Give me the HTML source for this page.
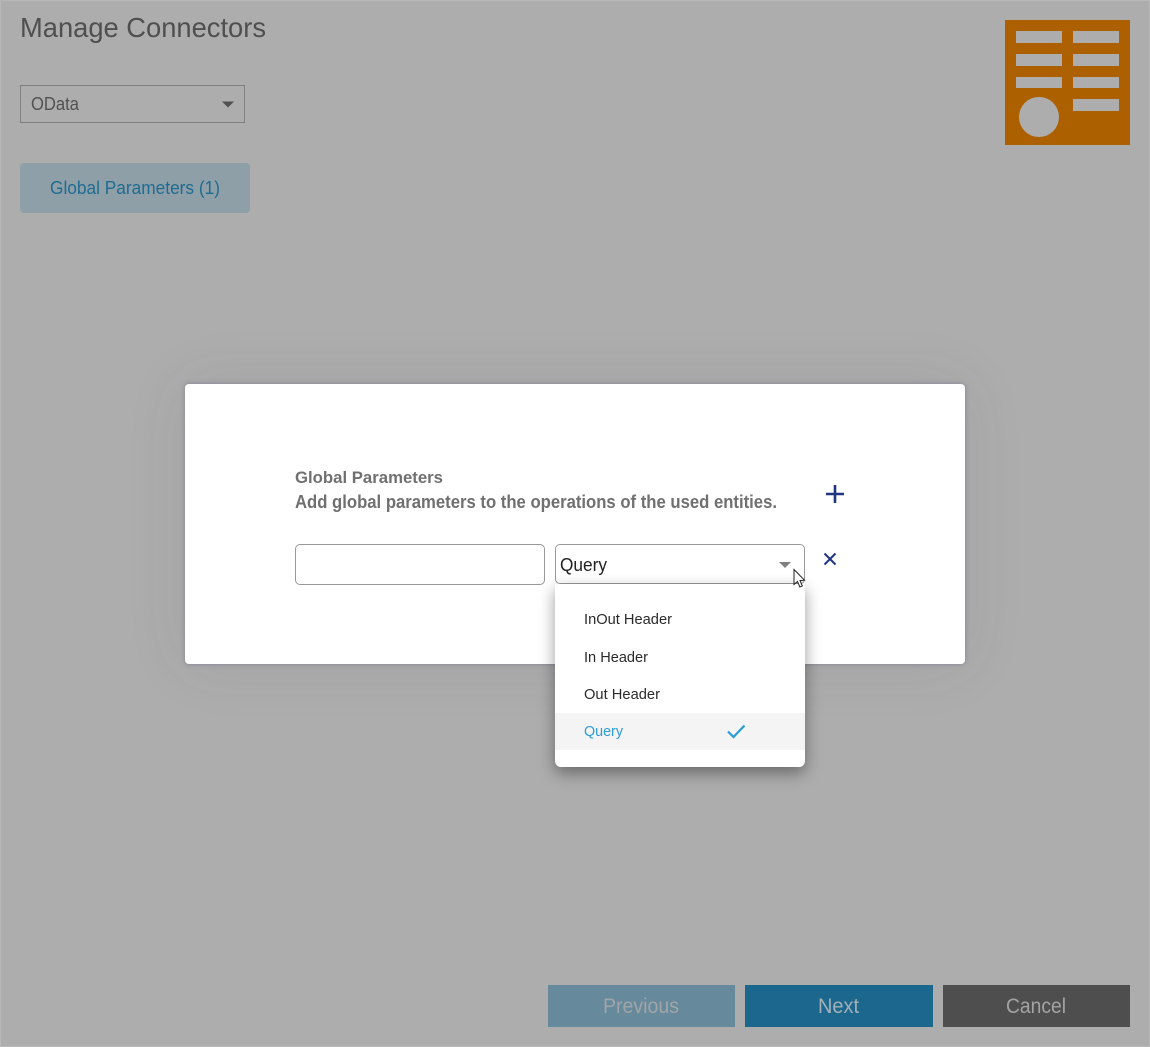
<!DOCTYPE html>
<html><head><meta charset="utf-8">
<style>
html,body{margin:0;padding:0;width:1150px;height:1047px;overflow:hidden;background:#adadad}
body{position:relative;font-family:"Liberation Sans",sans-serif}
.a{position:absolute;box-sizing:border-box}
svg{position:absolute;left:0;top:0}
text{font-family:"Liberation Sans",sans-serif}
</style></head>
<body>
<div class="a" style="left:0;top:0;width:1150px;height:1047px;border:1px solid #b8b8b8"></div>
<div class="a" style="left:20px;top:85px;width:225px;height:38px;border:1px solid #7f7f7f"></div>
<div class="a" style="left:20px;top:163px;width:230px;height:50px;background:#8e9fa8;border-radius:4px"></div>
<div class="a" style="left:548px;top:985px;width:187px;height:42px;background:#66899c"></div>
<div class="a" style="left:745px;top:985px;width:188px;height:42px;background:#1c678d"></div>
<div class="a" style="left:943px;top:985px;width:187px;height:42px;background:#4e4e4e"></div>
<div class="a" style="left:1005px;top:20px;width:125px;height:125px;background:#ad6000"></div>
<div class="a" style="left:1016px;top:31px;width:46px;height:12px;background:#adadad"></div>
<div class="a" style="left:1073px;top:31px;width:46px;height:12px;background:#adadad"></div>
<div class="a" style="left:1016px;top:54px;width:46px;height:12px;background:#adadad"></div>
<div class="a" style="left:1073px;top:54px;width:46px;height:12px;background:#adadad"></div>
<div class="a" style="left:1016px;top:77px;width:46px;height:11px;background:#adadad"></div>
<div class="a" style="left:1073px;top:77px;width:46px;height:11px;background:#adadad"></div>
<div class="a" style="left:1073px;top:99px;width:46px;height:12px;background:#adadad"></div>
<div class="a" style="left:1019px;top:96.500px;width:40px;height:40.500px;border-radius:50%;background:#adadad"></div>

<div class="a" style="left:185px;top:384px;width:780px;height:280px;background:#fff;border-radius:4px;box-shadow:0 0 60px rgba(70,70,95,.10),0 0 5px rgba(60,60,100,.35)"></div>
<div class="a" style="left:295px;top:544px;width:250px;height:41px;border:1px solid #999;border-radius:5px;background:#fff"></div>
<div class="a" style="left:555px;top:544px;width:250px;height:40px;border:1px solid #999;border-radius:5px;background:#fff"></div>
<div class="a" style="left:555px;top:584px;width:250px;height:183px;background:#fff;border-radius:0 0 6px 6px;box-shadow:0 6px 16px rgba(0,0,0,.4)"></div>
<div class="a" style="left:555px;top:713px;width:250px;height:37px;background:#f4f4f4"></div>

<svg width="1150" height="1047" viewBox="0 0 1150 1047">
<text x="20" y="37" font-size="28" fill="#4f4f4f" textLength="246" lengthAdjust="spacingAndGlyphs">Manage Connectors</text>
<text x="31" y="110" font-size="18" fill="#515151" textLength="48" lengthAdjust="spacingAndGlyphs">OData</text>
<path d="M222 101.500h12l-6 6z" fill="#505050"/>
<text x="50" y="194" font-size="18.500" fill="#1f6c92" textLength="170" lengthAdjust="spacingAndGlyphs">Global Parameters (1)</text>
<text x="603" y="1013" font-size="21" fill="#a0a5a8" textLength="76" lengthAdjust="spacingAndGlyphs">Previous</text>
<text x="818" y="1013" font-size="21" fill="#a3b0b8" textLength="41" lengthAdjust="spacingAndGlyphs">Next</text>
<text x="1006" y="1013" font-size="21" fill="#a3a3a3" textLength="60" lengthAdjust="spacingAndGlyphs">Cancel</text>
<text x="295" y="483" font-size="17" font-weight="bold" fill="#707070" textLength="148" lengthAdjust="spacingAndGlyphs">Global Parameters</text>
<text x="295" y="508" font-size="18" font-weight="bold" fill="#707070" textLength="482" lengthAdjust="spacingAndGlyphs">Add global parameters to the operations of the used entities.</text>
<text x="560" y="571" font-size="18.500" fill="#222" textLength="47" lengthAdjust="spacingAndGlyphs">Query</text>
<path d="M779 562h12l-6 6z" fill="#808080"/>
<path d="M826 494h18M835 485v18" stroke="#1f3580" stroke-width="2.600" fill="none"/>
<path d="M824.500 553.500l11 11M835.500 553.500l-11 11" stroke="#1f3580" stroke-width="2" fill="none"/>
<path d="M794 569.500v15l3.500-3 2.300 5.500 2.500-1-2.300-5.500 4.500-.3z" fill="#fff" stroke="#222" stroke-width="1"/>
<text x="584" y="624" font-size="14.500" fill="#2a2a2a" textLength="88" lengthAdjust="spacingAndGlyphs">InOut Header</text>
<text x="584" y="662" font-size="14.500" fill="#2a2a2a" textLength="64" lengthAdjust="spacingAndGlyphs">In Header</text>
<text x="584" y="699" font-size="14.500" fill="#2a2a2a" textLength="76" lengthAdjust="spacingAndGlyphs">Out Header</text>
<text x="584" y="736" font-size="14.500" fill="#2a9dd6" textLength="39" lengthAdjust="spacingAndGlyphs">Query</text>
<path d="M728 731.500l5.500 5.500 11-11.500" stroke="#2a9dd6" stroke-width="2.200" fill="none"/>
</svg>
</body></html>
